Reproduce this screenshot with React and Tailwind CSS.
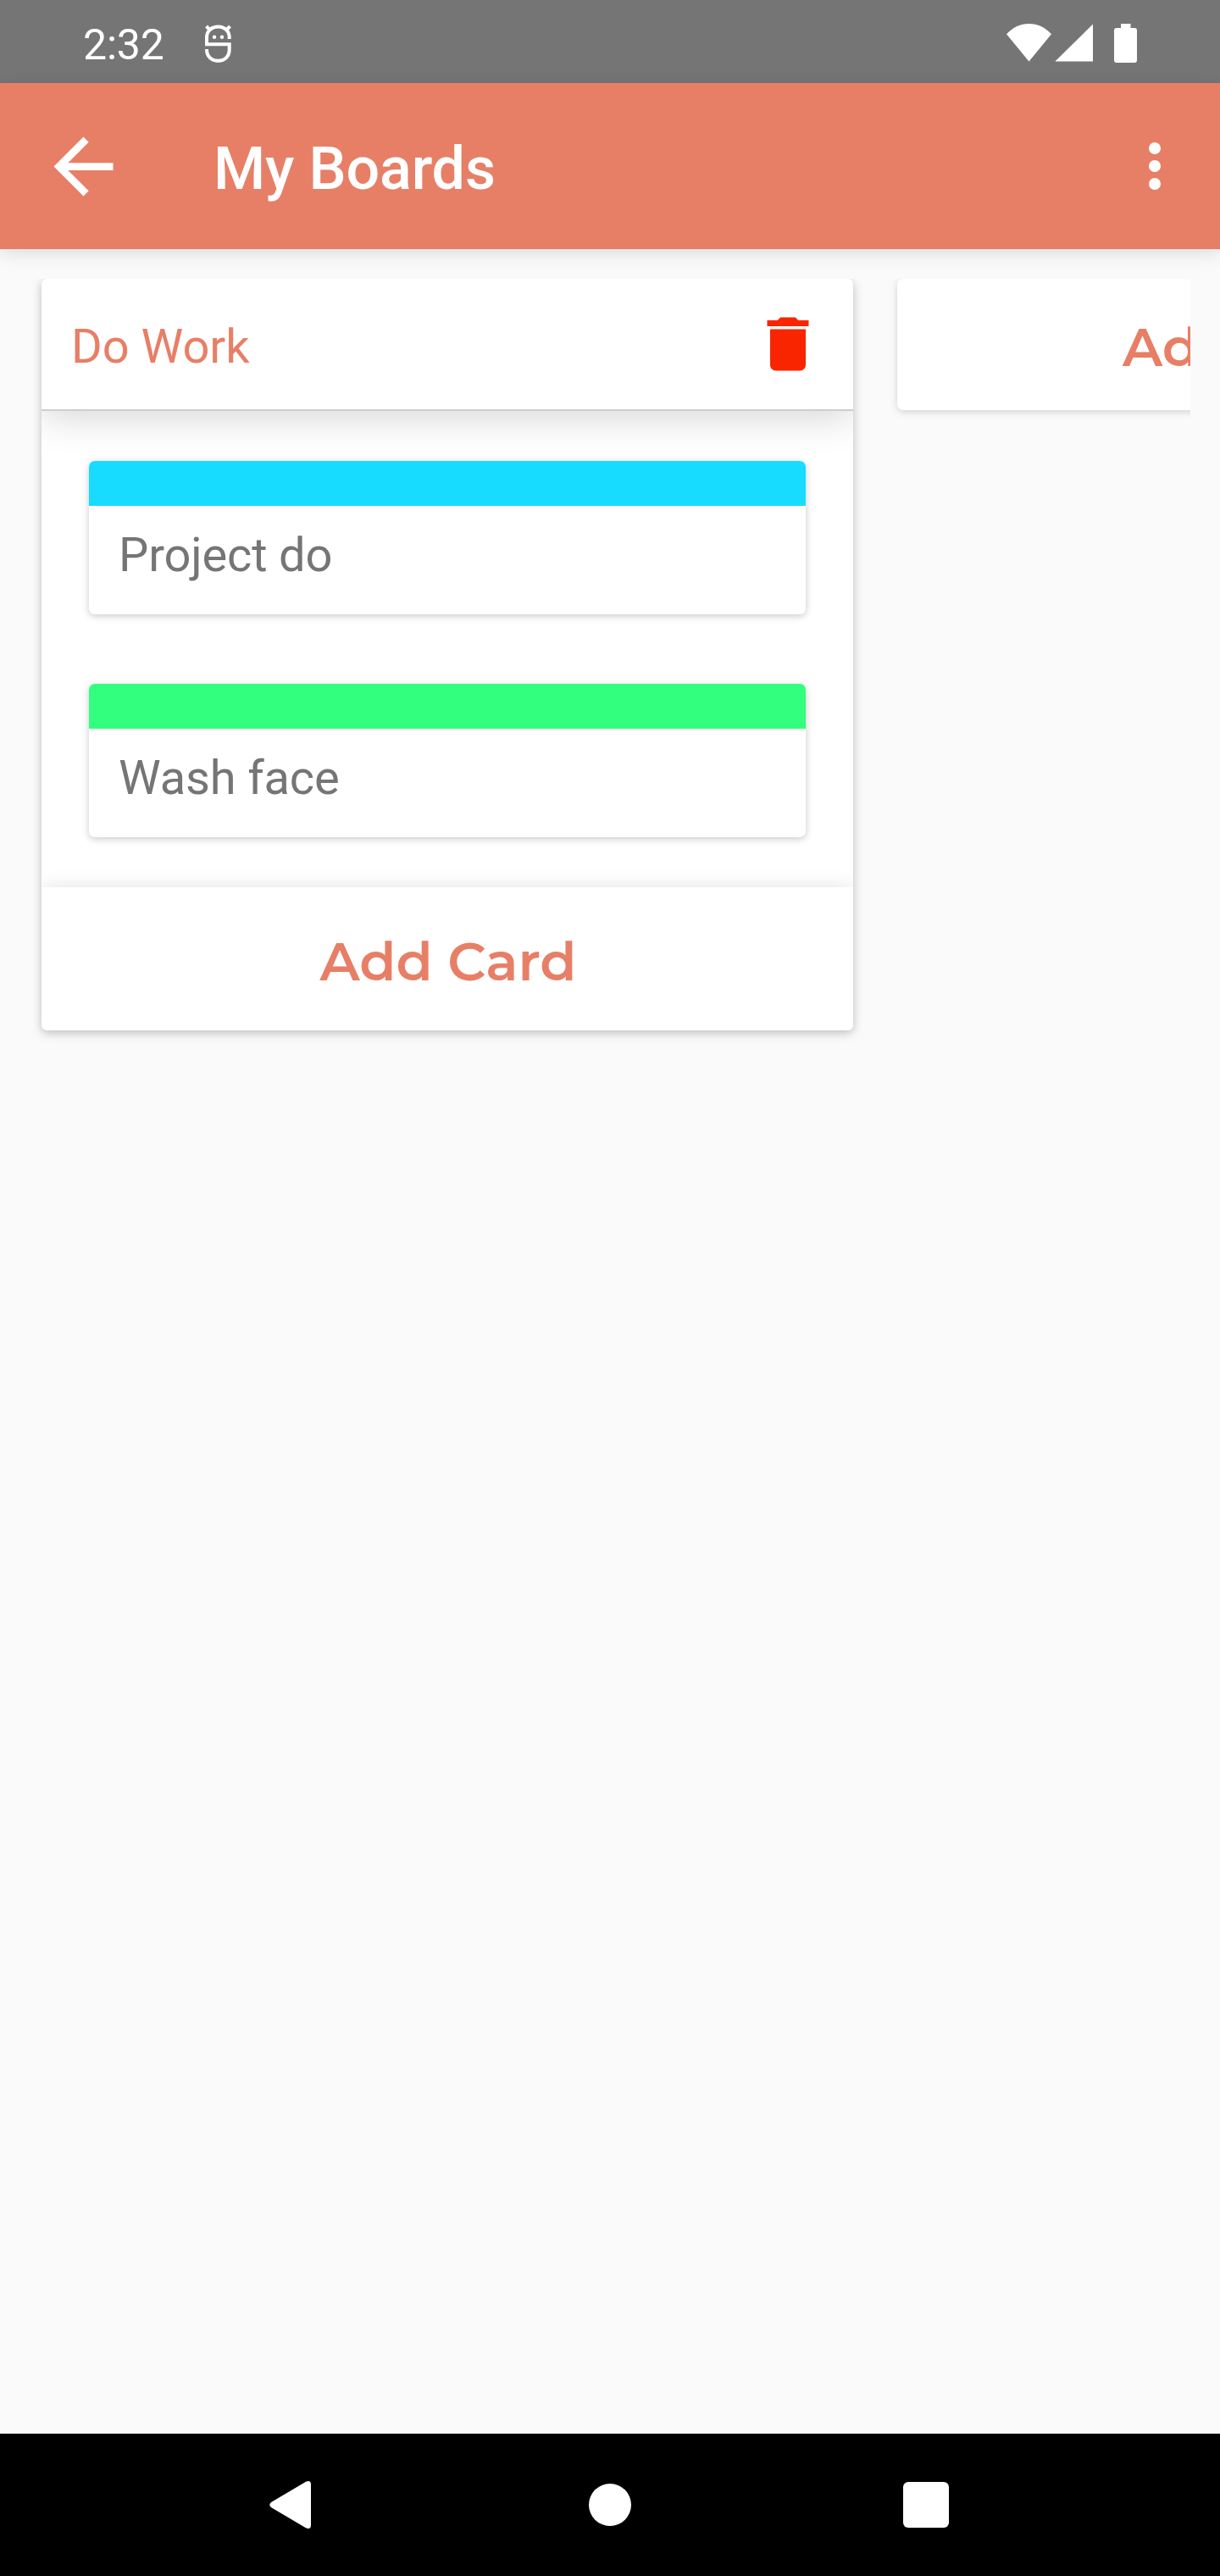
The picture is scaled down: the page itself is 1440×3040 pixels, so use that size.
const titleFont = "font-['Roboto',sans-serif]";
const buttonFont = "font-['Montserrat','Inter',sans-serif]";

function StatusBar() {
  return (
    <div className="flex h-[98px] shrink-0 items-center justify-between bg-[#757575] pl-[98px] pr-[98px] text-white">
      <div className="flex items-center">
        <span className="mt-[8px] w-[143px] text-[50px] leading-[58px] tracking-[-0.2px]">2:32</span>
        <svg className="mt-[4px] h-[47px] w-[34px]" viewBox="0 0 34 47" fill="none" stroke="white">
          <path d="M29.700 18V16C29.700 8.500 24 3.500 16.500 3.500S3 8.500 3 16V24.300H29.700V30.500C29.700 38.500 24.500 43.700 16.500 43.700S3 38.500 3 30.500V30" strokeWidth="4" />
          <path d="M2.500 3L7 7.500M30.500 3L26 7.500" strokeWidth="4" />
          <circle cx="12" cy="15.700" r="2.200" fill="white" stroke="none" />
          <circle cx="21" cy="15.700" r="2.200" fill="white" stroke="none" />
        </svg>
      </div>
      <div className="mt-[4px] flex items-start">
        <svg className="h-[46px] w-[54px]" viewBox="0 0 54 46" fill="white">
          <path d="M0 12.300C7.500 4 16.500 0 26.500 0S45.500 4 53 12.300L26.500 44.500Z" />
        </svg>
        <svg className="ml-[3px] h-[46px] w-[46px]" viewBox="0 0 46 46" fill="white">
          <path d="M0.300 44.500L45 0.500V44.500Z" />
        </svg>
        <svg className="ml-[24px] h-[46px] w-[27px]" viewBox="0 0 27 46" fill="white">
          <path d="M8 0H19.500V5H24Q27 5 27 8V43Q27 46 24 46H3Q0 46 0 43V8Q0 5 3 5H8Z" />
        </svg>
      </div>
    </div>
  );
}

function AppBar() {
  return (
    <div className="relative flex h-[196px] shrink-0 items-center bg-[#e77f67] pl-[46px] pr-[35px] text-white shadow-[0_5px_20px_rgba(0,0,0,0.12)]">
      <svg className="size-[105px]" viewBox="0 0 24 24" fill="white">
        <path d="M20 11H7.830l5.590-5.590L12 4l-8 8 8 8 1.410-1.410L7.830 13H20v-2z" />
      </svg>
      <h1 className="ml-[101px] mt-[6px] flex-1 text-[70px] font-medium leading-[82px] tracking-[-0.15px]">My Boards</h1>
      <svg className="size-[84px]" viewBox="0 0 24 24" fill="white">
        <circle cx="12" cy="6" r="2" />
        <circle cx="12" cy="12" r="2" />
        <circle cx="12" cy="18" r="2" />
      </svg>
    </div>
  );
}

function TaskCard({ label, stripe }) {
  return (
    <div className="h-[181px] overflow-hidden rounded-[7px] bg-white shadow-[0_2px_8px_rgba(0,0,0,0.22)]">
      <div className={`h-[53px] ${stripe}`} />
      <p className="pl-[35px] pt-[25px] text-[56px] leading-[66px] tracking-[-0.15px] text-[#757575]">{label}</p>
    </div>
  );
}

function TaskList() {
  return (
    <section className="w-[958px] shrink-0 overflow-hidden rounded-[7px] bg-white">
      <header className="relative flex h-[156px] items-center justify-between border-b-2 border-[#cdcfce] bg-white px-[35px] shadow-[0_10px_40px_rgba(0,0,0,0.15)]">
        <h2 className="mt-[6px] text-[56px] leading-[66px] text-[#e77f67]">Do Work</h2>
        <svg className="size-[84px]" viewBox="0 0 24 24" fill="#f92500">
          <path d="M6 19c0 1.100.9 2 2 2h8c1.100 0 2-.9 2-2V7H6v12zM19 4h-3.500l-1-1h-5l-1 1H5v2h14V4z" />
        </svg>
      </header>
      <div className="flex flex-col gap-[82px] px-[56px] pb-[59px] pt-[59px]">
        <TaskCard label="Project do" stripe="bg-[#18dcff]" />
        <TaskCard label="Wash face" stripe="bg-[#32ff7e]" />
      </div>
      <footer className="relative flex h-[169px] items-center justify-center bg-white shadow-[0_4px_24px_rgba(0,0,0,0.16)]">
        <span className={`${buttonFont} ml-[2px] mt-[6px] whitespace-nowrap text-[63px] font-semibold leading-[72px] text-[#e77f67]`}>
          Add Card
        </span>
      </footer>
    </section>
  );
}

export default function App() {
  return (
    <div className={`${titleFont} flex h-[3040px] w-[1440px] flex-col overflow-hidden bg-[#fafafa]`}>
      <StatusBar />
      <AppBar />
      <main className="mx-[35px] mt-[35px] flex flex-1 items-start gap-[52px] overflow-hidden pl-[14px]">
        <div className="shrink-0 rounded-[7px] shadow-[0_3px_12px_rgba(0,0,0,0.25)]">
          <TaskList />
        </div>
        <div className="flex h-[155px] w-[958px] shrink-0 items-center rounded-[7px] bg-white pl-[266px] shadow-[0_2px_9px_rgba(0,0,0,0.17)]">
          <span className={`${buttonFont} mt-[6px] whitespace-nowrap text-[63px] font-semibold leading-[72px] text-[#e77f67]`}>
            Add List
          </span>
        </div>
      </main>
      <nav className="relative flex h-[168px] shrink-0 items-center bg-black pl-[318px]">
        <svg className="h-[56px] w-[50px]" viewBox="0 0 50 56" fill="white">
          <path d="M2 25L43 0.700Q49 -1.500 49 4V52Q49 57.500 43 55.300L2 31Q-1.500 28 2 25Z" />
        </svg>
        <div className="ml-[327px] size-[50px] rounded-full bg-white" />
        <div className="ml-[321px] size-[54px] rounded-[6px] bg-white" />
      </nav>
    </div>
  );
}
